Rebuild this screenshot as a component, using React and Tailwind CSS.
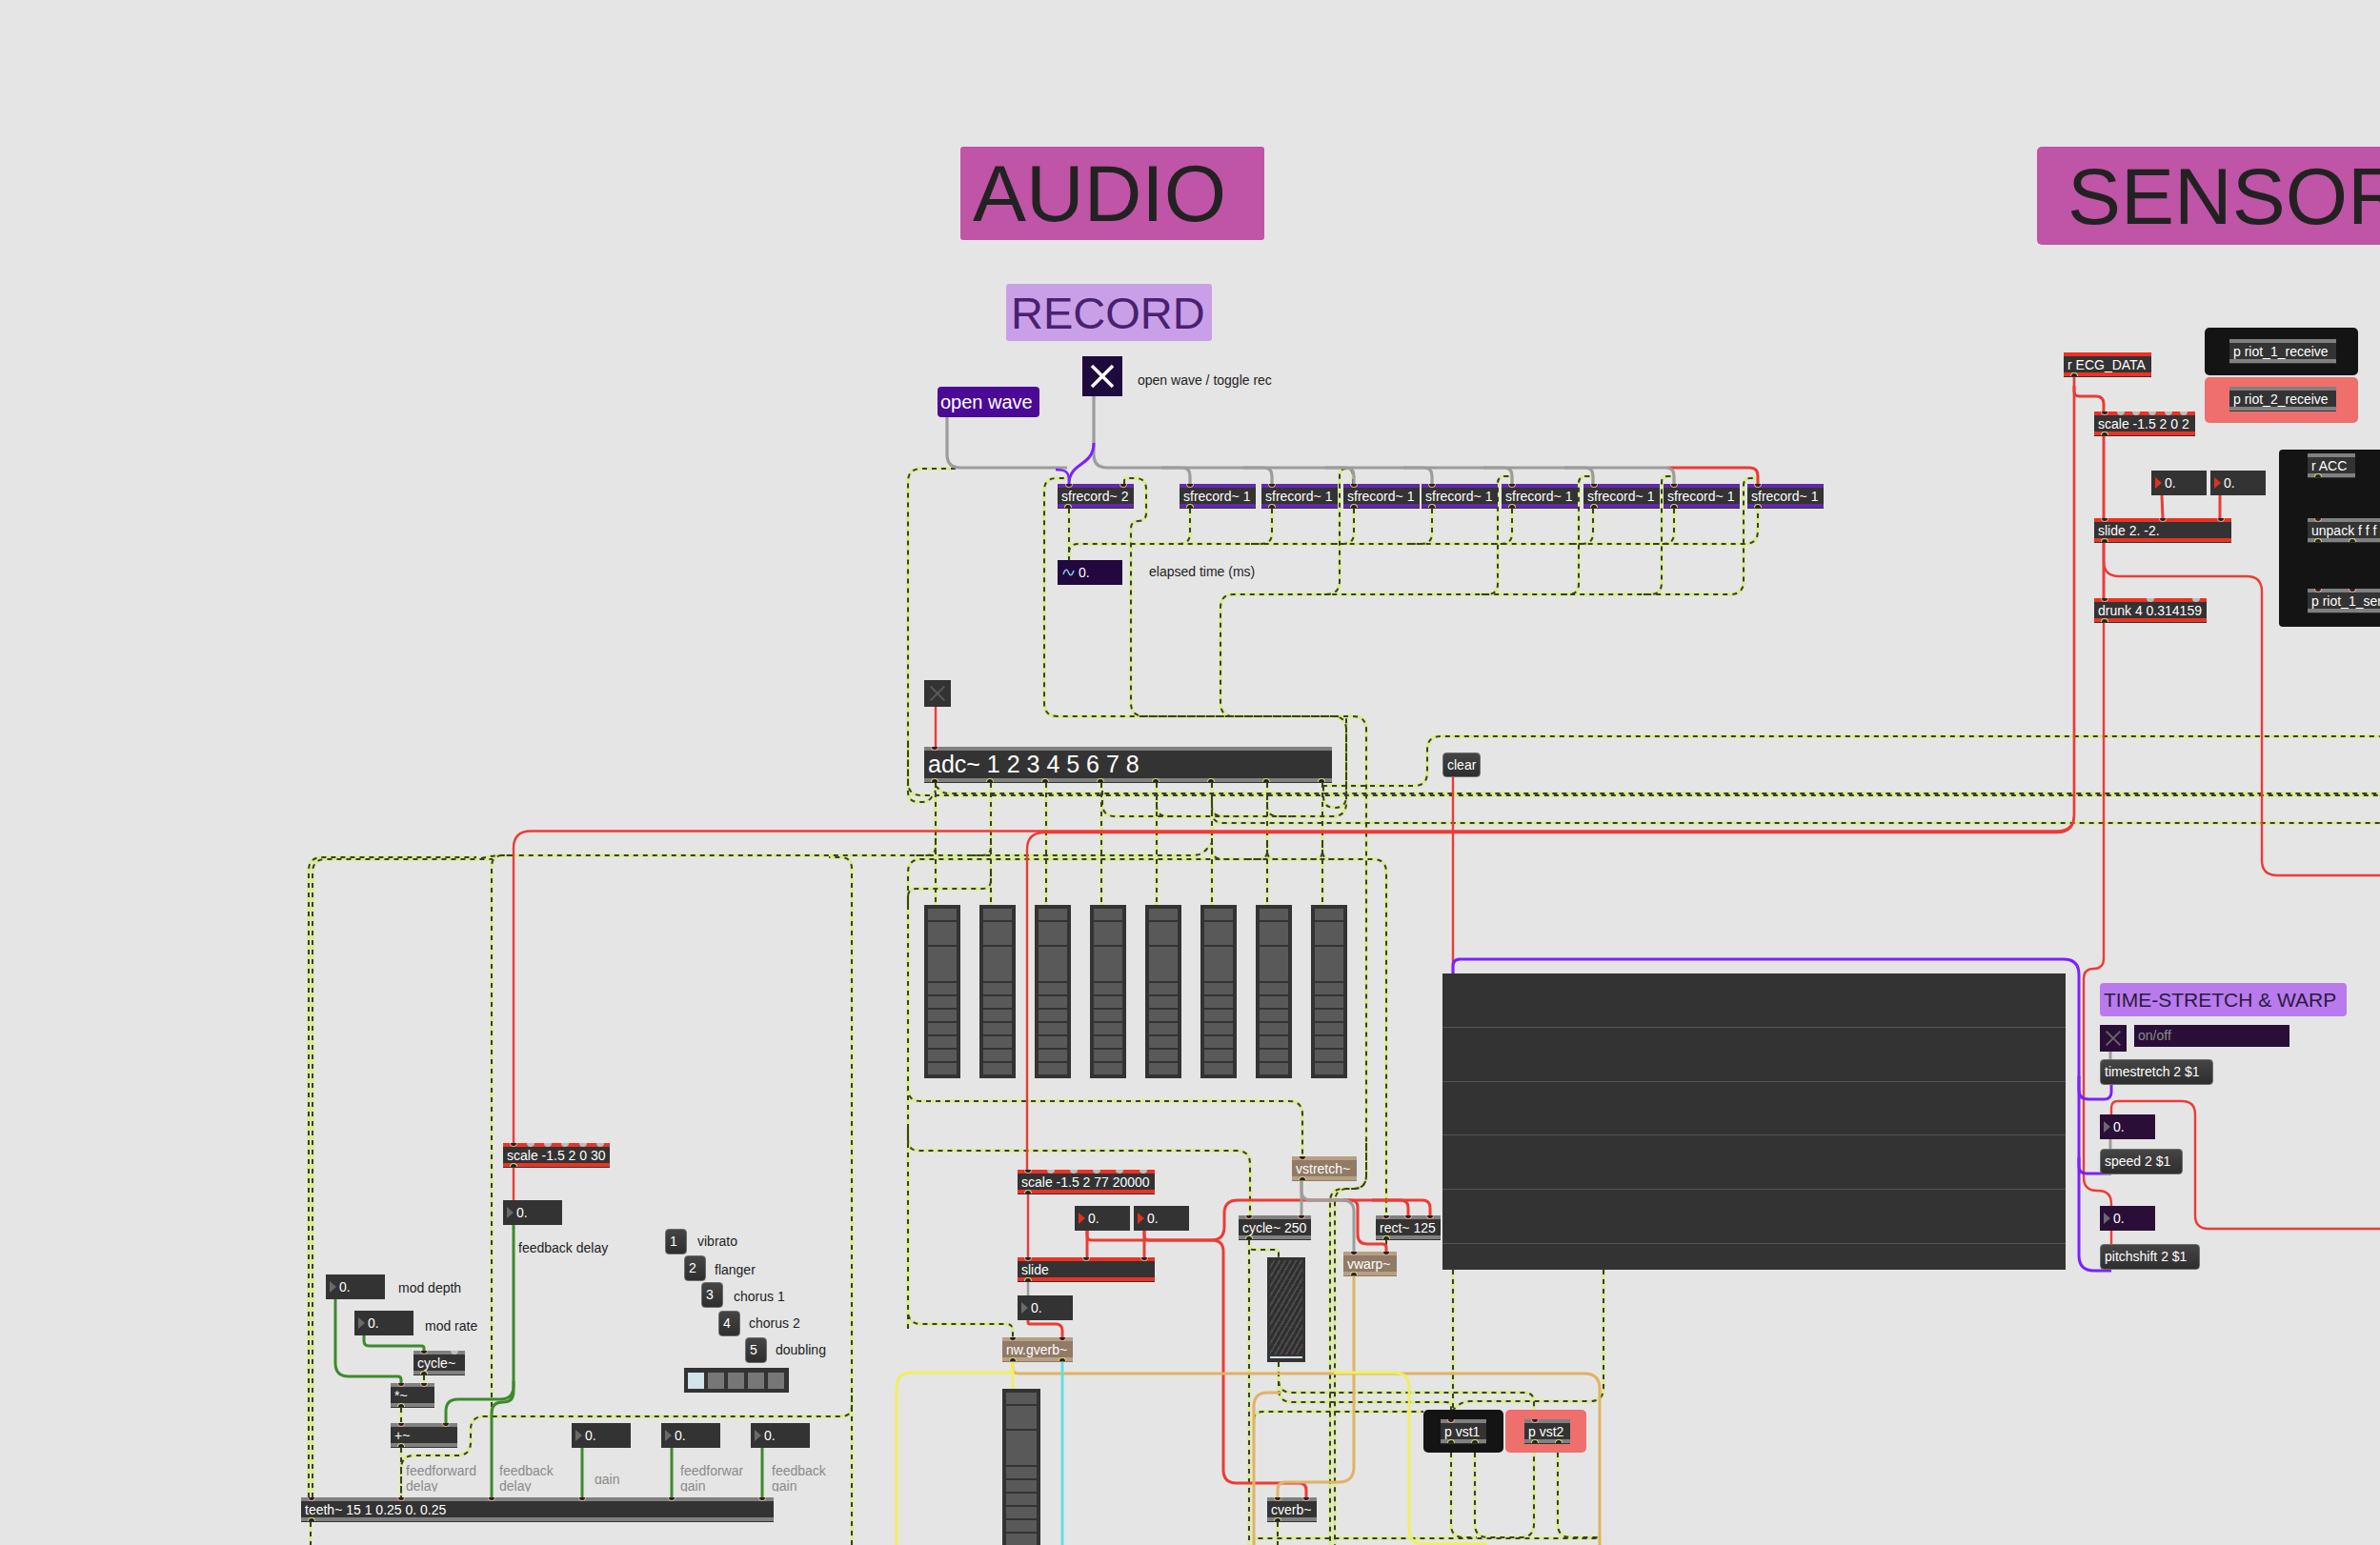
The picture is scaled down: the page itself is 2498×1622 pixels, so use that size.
import React from 'react';

// Rounded orthogonal patch cords, the way Max draws them
const cord = (pts, r = 14) => {
  let d = `M${pts[0][0]} ${pts[0][1]}`;
  for (let i = 1; i < pts.length - 1; i++) {
    const [px, py] = pts[i - 1];
    const [cx, cy] = pts[i];
    const [nx, ny] = pts[i + 1];
    const l1 = Math.hypot(cx - px, cy - py) || 1;
    const l2 = Math.hypot(nx - cx, ny - cy) || 1;
    const c = Math.min(r, l1 / 2, l2 / 2);
    d += ` L${cx - ((cx - px) / l1) * c} ${cy - ((cy - py) / l1) * c}`;
    d += ` Q${cx} ${cy} ${cx + ((nx - cx) / l2) * c} ${cy + ((ny - cy) / l2) * c}`;
  }
  const last = pts[pts.length - 1];
  return `${d} L${last[0]} ${last[1]}`;
};

const signalCords = [
  // sfrecord outlets and elapsed time bus
  [[1122, 534], [1122, 588]],
  [[1122, 590], [1122, 571], [1845, 571], [1845, 534]],
  ...[1249, 1335, 1421, 1503, 1587, 1672, 1757].map((x) => [[x, 534], [x, 571], [x - 22, 571]]),
  // adc~ outlets back up to the sfrecord inlets
  [[1122, 508], [1122, 502], [1096, 502], [1096, 752], [1413, 752], [1413, 848], [1389, 848], [1389, 822]],
  [[1180, 508], [1180, 502], [1203, 502], [1203, 547], [1187, 547], [1187, 752], [1300, 752]],
  [[1300, 752], [1434, 752], [1434, 1248], [1401, 1248], [1401, 1622]],
  [[1434, 1200], [1434, 1248], [1396, 1248], [1396, 1622]],
  [[1420, 508], [1420, 492], [1406, 492], [1406, 624], [1281, 624], [1281, 752], [1320, 752]],
  [[1845, 508], [1845, 502], [1830, 502], [1830, 624], [1390, 624]],
  [[1757, 508], [1757, 500], [1744, 500], [1744, 624], [1720, 624]],
  [[1672, 508], [1672, 500], [1657, 500], [1657, 624], [1635, 624]],
  [[1587, 508], [1587, 500], [1572, 500], [1572, 624], [1550, 624]],
  // long runs to the right
  [[1003, 492], [953, 492], [953, 835], [2498, 835]],
  [[953, 780], [953, 842], [975, 842], [982, 830]],
  [[982, 825], [990, 833], [2498, 833]],
  [[1157, 830], [1157, 857], [1413, 857], [1413, 752]],
  [[1214, 835], [1214, 857], [1240, 857]],
  [[1272, 835], [1272, 857], [1295, 857]],
  [[1330, 835], [1330, 857], [1355, 857]],
  [[1272, 840], [1272, 864], [2498, 864]],
  [[1388, 825], [1498, 825], [1498, 773], [2498, 773]],
  // adc~ to meters
  ...[982, 1040, 1098, 1156, 1214, 1272, 1330, 1388].map((x) => [[x, 822], [x, 950]]),
  // big lower left frames
  [[324, 1572], [324, 900], [500, 900]],
  [[328, 1572], [328, 902], [517, 902]],
  [[505, 901], [520, 898], [1261, 898], [1272, 885]],
  [[516, 1487], [516, 898], [540, 898]],
  [[894, 1622], [894, 900], [870, 900]],
  [[894, 1465], [894, 1487], [494, 1487], [494, 1528], [421, 1528], [421, 1572]],
  [[953, 1395], [953, 902], [1455, 902], [1455, 1276]],
  [[953, 1130], [953, 1156], [1367, 1156], [1367, 1214]],
  [[953, 1185], [953, 1208], [1312, 1208], [1312, 1276]],
  [[953, 1300], [953, 1390], [1063, 1390], [1063, 1404]],
  [[953, 950], [953, 933], [1040, 933], [1040, 915]],
  [[982, 880], [982, 898], [960, 898]],
  [[1040, 880], [1040, 898], [1015, 898]],
  [[1272, 880], [1272, 902], [1296, 902]],
  [[1330, 885], [1330, 902], [1305, 902]],
  [[1330, 885], [1330, 902], [1355, 902]],
  [[1388, 885], [1388, 902], [1365, 902]],
  [[1388, 885], [1388, 902], [1410, 902]],
  // small hops
  [[421, 1478], [421, 1494]],
  [[445, 1444], [445, 1452]],
  [[421, 1520], [421, 1572]],
  [[326, 1598], [326, 1622]],
  [[1311, 1302], [1311, 1622]],
  [[1311, 1302], [1311, 1312], [1342, 1312], [1342, 1320]],
  [[1455, 1302], [1455, 1314]],
  // vst section
  [[1342, 1430], [1342, 1462], [1610, 1462], [1610, 1482]],
  [[1342, 1440], [1342, 1472], [1523, 1472], [1523, 1482]],
  [[1316, 1500], [1316, 1482], [1494, 1482]],
  [[1525, 1333], [1525, 1482]],
  [[1683, 1333], [1683, 1471], [1535, 1471], [1523, 1482]],
  [[1341, 1598], [1341, 1622]],
  [[1523, 1525], [1523, 1614], [1550, 1614]],
  [[1548, 1525], [1548, 1614], [1610, 1614], [1610, 1525]],
  [[1635, 1525], [1635, 1614], [1679, 1614], [1679, 1622]],
  [[1316, 1622], [1316, 1615], [1679, 1615]],
];

const colorCords = [
  { color: '#ee3b35', width: 2.4, pts: [[2177, 396], [2177, 872.5], [539, 872.5], [539, 1200]], r: 18 },
  { color: '#ee3b35', width: 2.4, pts: [[2177, 396], [2177, 874], [1078, 874], [1078, 1228]], r: 18 },
  { color: '#ee3b35', width: 3, pts: [[2177, 405], [2177, 416], [2208, 416], [2208, 432]], r: 10 },
  { color: '#ee3b35', width: 3, pts: [[2208, 457], [2208, 544]] },
  { color: '#ee3b35', width: 3, pts: [[2269, 520], [2270, 544]] },
  { color: '#ee3b35', width: 3, pts: [[2330, 520], [2330, 544]] },
  { color: '#ee3b35', width: 2.4, pts: [[2208, 570], [2208, 605], [2374, 605], [2374, 919], [2498, 919]], r: 16 },
  { color: '#ee3b35', width: 3, pts: [[2208, 570], [2208, 628]] },
  { color: '#ee3b35', width: 2.4, pts: [[2208, 654], [2208, 1017], [2187, 1017], [2187, 1250], [2216, 1250], [2216, 1306]] },
  { color: '#ee3b35', width: 2.4, pts: [[2216, 1170], [2216, 1156], [2304, 1156], [2304, 1290], [2498, 1290]] },
  { color: '#ee3b35', width: 2.4, pts: [[1525, 816], [1525, 1022]] },
  { color: '#ee3b35', width: 2.4, pts: [[982, 742], [982, 784]] },
  { color: '#ee3b35', width: 2.4, pts: [[539, 1226], [539, 1260]] },
  { color: '#ee3b35', width: 2.4, pts: [[1079, 1254], [1079, 1320]] },
  { color: '#ee3b35', width: 3, pts: [[1141, 1292], [1141, 1320]] },
  { color: '#ee3b35', width: 3, pts: [[1201, 1292], [1201, 1320]] },
  { color: '#ee3b35', width: 3, pts: [[1141, 1292], [1141, 1302], [1285, 1302], [1285, 1260], [1501, 1260], [1501, 1276]] },
  { color: '#ee3b35', width: 3, pts: [[1201, 1292], [1201, 1302], [1260, 1302]] },
  { color: '#ee3b35', width: 3, pts: [[1440, 1260], [1478, 1260], [1478, 1276]] },
  { color: '#ee3b35', width: 3, pts: [[1410, 1260], [1425, 1260], [1425, 1306], [1455, 1306], [1455, 1314]], r: 10 },
  { color: '#ee3b35', width: 3, pts: [[1260, 1302], [1284, 1302], [1284, 1557], [1371, 1557], [1371, 1572]] },
  { color: '#ee3b35', width: 3, pts: [[1079, 1386], [1079, 1390], [1115, 1390], [1115, 1404]], r: 8 },
  { color: '#ee3b35', width: 3, pts: [[1750, 491], [1845, 491], [1845, 508]] },
  { color: '#9c9c9c', width: 3.2, pts: [[994, 438], [994, 491], [1120, 491]] },
  { color: '#9c9c9c', width: 3.2, pts: [[1148, 416], [1148, 491], [1757, 491], [1757, 508]] },
  ...[1249, 1335, 1421, 1503, 1587, 1672].map((x) => ({ color: '#9c9c9c', width: 3.2, pts: [[x - 30, 491], [x, 491], [x, 508]] })),
  { color: '#9c9c9c', width: 2.5, pts: [[1079, 1346], [1079, 1360]] },
  { color: '#9c9c9c', width: 3, pts: [[1366, 1240], [1366, 1276]] },
  { color: '#9c9c9c', width: 3, pts: [[1366, 1240], [1366, 1260], [1421, 1260], [1421, 1314]], r: 12 },
  { color: '#9c9c9c', width: 3, pts: [[2215, 1104], [2215, 1112]] },
  { color: '#9c9c9c', width: 3, pts: [[2215, 1196], [2215, 1206]] },
  { color: '#e2b264', width: 3, pts: [[1421, 1340], [1421, 1556], [1341, 1556], [1341, 1572]], r: 16 },
  { color: '#e2b264', width: 3, pts: [[1063, 1430], [1063, 1442], [1679, 1442], [1679, 1622]], r: 16 },
  { color: '#e2b264', width: 3, pts: [[1345, 1462], [1316, 1462], [1316, 1622]], r: 16 },
  { color: '#f0ee62', width: 3, pts: [[1063, 1430], [1063, 1458]] },
  { color: '#f0ee62', width: 3, pts: [[1063, 1430], [1063, 1441], [941, 1441], [941, 1622]], r: 16 },
  { color: '#f0ee62', width: 3, pts: [[1400, 1441], [1479, 1441], [1479, 1621], [1560, 1621]], r: 16 },
  { color: '#62dede', width: 3, pts: [[1115, 1430], [1115, 1622]] },
  { color: '#7a22ff', width: 3, pts: [[1525, 1022], [1525, 1007], [2182, 1007], [2182, 1334], [2216, 1334]], r: 16 },
  { color: '#7a22ff', width: 3, pts: [[2216, 1139], [2216, 1154], [2182, 1154], [2182, 1130]], r: 10 },
  { color: '#7a22ff', width: 3, pts: [[2216, 1232], [2182, 1232], [2182, 1215]], r: 8 },
  { color: '#3d8a2b', width: 3, pts: [[352, 1364], [352, 1445], [421, 1445], [421, 1452]] },
  { color: '#3d8a2b', width: 3, pts: [[382, 1402], [382, 1413], [445, 1413], [445, 1418]], r: 10 },
  { color: '#3d8a2b', width: 3, pts: [[539, 1286], [539, 1469], [468, 1469], [468, 1494]] },
  { color: '#3d8a2b', width: 3, pts: [[539, 1450], [539, 1472], [516, 1472], [516, 1572]] },
  { color: '#3d8a2b', width: 3, pts: [[611, 1520], [611, 1572]] },
  { color: '#3d8a2b', width: 3, pts: [[705, 1520], [705, 1572]] },
  { color: '#3d8a2b', width: 3, pts: [[800, 1520], [800, 1572]] },
];

function Cords() {
  return (
    <svg className="absolute left-0 top-0" width="2498" height="1622" fill="none">
      {signalCords.map((pts, i) => (
        <path key={i} d={cord(pts)} stroke="#d8ee8c" strokeWidth="3.4" />
      ))}
      {signalCords.map((pts, i) => (
        <path key={i} d={cord(pts)} stroke="#3b3b3b" strokeWidth="2" strokeDasharray="5 5" />
      ))}
      {colorCords.map((c, i) => (
        <path key={i} d={cord(c.pts, c.r ?? 14)} stroke={c.color} strokeWidth={c.width} />
      ))}
      <path d="M1148 465C1148 490 1122 485 1122 508" stroke="#7a22ff" strokeWidth="3" />
      <path d="M1108 493C1118 493 1122 495 1122 505" stroke="#7a22ff" strokeWidth="2.4" />
    </svg>
  );
}

const bandStyles = {
  gray: { body: 'bg-[#333333]', band: 'bg-[#808080]' },
  red: { body: 'bg-[#333333]', band: 'bg-[#ee3124]' },
  purple: { body: 'bg-[#333333]', band: 'bg-[#6229ad]' },
  tan: { body: 'bg-[#917a66]', band: 'bg-[#b5a084]' },
};

// Max object box: coloured strip on top and bottom with inlets and outlets
function Obj({ className, band = 'gray', text, inlets = [], outlets = [], idle = [], textClass = 'text-[14px]' }) {
  const s = bandStyles[band];
  return (
    <div className={`absolute h-[26px] flex items-center pl-[4px] whitespace-nowrap text-white overflow-hidden ${s.body} ${className}`}>
      <div className={`absolute left-0 right-0 top-0 h-[4px] ${s.band}`} />
      <div className={`absolute left-0 right-0 bottom-[1px] h-[4px] ${s.band}`} />
      <span className={`relative ${textClass}`}>{text}</span>
      {idle.map((x) => (
        <div key={x} className="absolute top-0 w-[8px] h-[4px] rounded-b-full bg-[#bdbdbd]" style={{ left: x - 4 }} />
      ))}
      {inlets.map((x) => (
        <div key={x} className="absolute top-0 w-[8px] h-[4px] rounded-b-full bg-[#222222] border border-t-0 border-[#e8a090]" style={{ left: x - 4 }} />
      ))}
      {outlets.map((x) => (
        <div key={x} className="absolute bottom-[1px] w-[8px] h-[4px] rounded-t-full bg-[#222222] border border-b-0 border-[#d8d870]" style={{ left: x - 4 }} />
      ))}
    </div>
  );
}

function NumBox({ className, red = false, bg = 'bg-[#333333]' }) {
  return (
    <div className={`absolute h-[26px] flex items-center text-white text-[14px] ${bg} ${className}`}>
      <div className={`ml-[4px] w-[7px] h-[12px] [clip-path:polygon(0_0,100%_50%,0_100%)] ${red ? 'bg-[#e0301e]' : 'bg-[#6a6a6a]'}`} />
      <span className="ml-[3px]">0.</span>
    </div>
  );
}

function Msg({ className, text }) {
  return (
    <div className={`absolute flex items-center pl-[4px] rounded-[4px] whitespace-nowrap text-[14px] text-white bg-linear-to-b from-[#454545] to-[#2e2e2e] border border-[#6e6e6e] ${className}`}>
      {text}
    </div>
  );
}

function Label({ className, children }) {
  return <div className={`absolute whitespace-nowrap text-[14px] leading-[16px] text-[#222222] ${className}`}>{children}</div>;
}

function GrayLabel({ className, lines }) {
  return (
    <div className={`absolute overflow-hidden text-[14px] leading-[16px] text-[#8a8a8a] whitespace-nowrap ${className}`}>
      {lines.map((l) => (
        <div key={l}>{l}</div>
      ))}
    </div>
  );
}

function Cross({ className, color, weight, inset }) {
  return (
    <div className={`absolute ${className}`}>
      <svg className="w-full h-full" viewBox="0 0 42 42">
        <path d={`M${inset} ${inset}L${42 - inset} ${42 - inset}M${42 - inset} ${inset}L${inset} ${42 - inset}`} stroke={color} strokeWidth={weight} />
      </svg>
    </div>
  );
}

const cellHeights = ['h-[12px]', 'h-[24px]', 'h-[36px]', 'h-[12px]', 'h-[12px]', 'h-[12px]', 'h-[12px]', 'h-[12px]', 'h-[12px]', 'h-[12px]'];

function Meter({ className }) {
  return (
    <div className={`absolute w-[38px] h-[182px] p-[4px] flex flex-col gap-[2px] bg-[#333333] ${className}`}>
      {cellHeights.map((h, i) => (
        <div key={i} className={`${h} bg-[#595959]`} />
      ))}
    </div>
  );
}

export default function App() {
  return (
    <div className="relative w-[2498px] h-[1622px] overflow-hidden bg-[#e5e5e5] font-['Liberation_Sans',Arial,sans-serif]">
      <Cords />

      {/* section titles */}
      <div className="absolute left-[1008px] top-[154px] w-[319px] h-[98px] rounded-[3px] pl-[13px] flex items-center bg-[#c054a6] text-[84px] leading-none text-[#222222]">AUDIO</div>
      <div className="absolute left-[2138px] top-[154px] w-[420px] h-[103px] rounded-[5px] pl-[32px] flex items-center bg-[#c054a6] text-[84px] leading-none text-[#222222] whitespace-nowrap">SENSOR</div>
      <div className="absolute left-[1056px] top-[298px] w-[216px] h-[60px] rounded-[3px] pl-[5px] flex items-center bg-[#c9a0e8] text-[47px] leading-none text-[#4a2070]">RECORD</div>
      <div className="absolute left-[2204px] top-[1032px] w-[259px] h-[35px] rounded-[4px] pl-[4px] flex items-center bg-[#b97aee] text-[21px] leading-none text-[#2a1b3e] whitespace-nowrap">TIME-STRETCH &amp; WARP</div>

      {/* record section */}
      <div className="absolute left-[984px] top-[406px] w-[107px] h-[32px] rounded-[4px] pl-[3px] flex items-center bg-[#4b0a96] text-[20px] text-white whitespace-nowrap">open wave</div>
      <Cross className="left-[1136px] top-[374px] w-[42px] h-[42px] bg-[#1f0a3e]" color="#ffffff" weight="3.5" inset="10" />
      <Label className="left-[1194px] top-[391px]">open wave / toggle rec</Label>
      <Obj className="left-[1110px] top-[508px] w-[80px]" band="purple" text="sfrecord~ 2" inlets={[12, 69]} outlets={[11]} />
      <Obj className="left-[1238px] top-[508px] w-[80px]" band="purple" text="sfrecord~ 1" inlets={[11]} outlets={[11]} />
      <Obj className="left-[1324px] top-[508px] w-[80px]" band="purple" text="sfrecord~ 1" inlets={[11]} outlets={[11]} />
      <Obj className="left-[1410px] top-[508px] w-[80px]" band="purple" text="sfrecord~ 1" inlets={[11]} outlets={[11]} />
      <Obj className="left-[1492px] top-[508px] w-[80px]" band="purple" text="sfrecord~ 1" inlets={[11]} outlets={[11]} />
      <Obj className="left-[1576px] top-[508px] w-[80px]" band="purple" text="sfrecord~ 1" inlets={[11]} outlets={[11]} />
      <Obj className="left-[1662px] top-[508px] w-[80px]" band="purple" text="sfrecord~ 1" inlets={[11]} outlets={[11]} />
      <Obj className="left-[1746px] top-[508px] w-[80px]" band="purple" text="sfrecord~ 1" inlets={[11]} outlets={[11]} />
      <Obj className="left-[1834px] top-[508px] w-[80px]" band="purple" text="sfrecord~ 1" inlets={[11]} outlets={[11]} />
      <div className="absolute left-[1110px] top-[588px] w-[68px] h-[26px] flex items-center bg-[#22083f] text-[14px] text-white">
        <svg className="ml-[5px]" width="13" height="10" viewBox="0 0 13 10" fill="none">
          <path d="M1 7C3 1 5 1 6.5 5S10 9 12 3" stroke="#7fc8dc" strokeWidth="1.6" />
        </svg>
        <span className="ml-[4px]">0.</span>
      </div>
      <Label className="left-[1206px] top-[592px]">elapsed time (ms)</Label>

      {/* audio input */}
      <Cross className="left-[970px] top-[714px] w-[28px] h-[28px] bg-[#333333]" color="#5a5a5a" weight="3" inset="10" />
      <Obj className="left-[970px] top-[784px] w-[428px] !h-[38px]" text="adc~ 1 2 3 4 5 6 7 8" textClass="text-[25px]" inlets={[11]} outlets={[11, 69, 127, 185, 243, 301, 359, 417]} />
      <Msg className="left-[1514px] top-[790px] w-[40px] h-[26px]" text="clear" />
      <Meter className="left-[970px] top-[950px]" />
      <Meter className="left-[1028px] top-[950px]" />
      <Meter className="left-[1086px] top-[950px]" />
      <Meter className="left-[1144px] top-[950px]" />
      <Meter className="left-[1202px] top-[950px]" />
      <Meter className="left-[1260px] top-[950px]" />
      <Meter className="left-[1318px] top-[950px]" />
      <Meter className="left-[1376px] top-[950px]" />

      {/* big table */}
      <div className="absolute left-[1514px] top-[1022px] w-[654px] h-[311px] flex flex-col bg-[#333333]">
        <div className="h-[57px] border-b border-[#555555]" />
        <div className="h-[57px] border-b border-[#555555]" />
        <div className="h-[56px] border-b border-[#555555]" />
        <div className="h-[57px] border-b border-[#555555]" />
        <div className="h-[57px] border-b border-[#555555]" />
      </div>

      {/* sensor section */}
      <Obj className="left-[2166px] top-[370px] w-[92px]" band="red" text="r ECG_DATA" outlets={[11]} />
      <div className="absolute left-[2314px] top-[344px] w-[161px] h-[50px] rounded-[5px] bg-[#141414]" />
      <Obj className="left-[2340px] top-[356px] w-[112px]" text="p riot_1_receive" />
      <div className="absolute left-[2314px] top-[396px] w-[161px] h-[48px] rounded-[5px] bg-[#ee6f6c]" />
      <Obj className="left-[2340px] top-[406px] w-[112px]" text="p riot_2_receive" />
      <Obj className="left-[2198px] top-[432px] w-[106px]" band="red" text="scale -1.5 2 0 2" inlets={[11]} idle={[28, 44, 61, 78, 94]} outlets={[11]} />
      <NumBox className="left-[2258px] top-[494px] w-[58px]" red />
      <NumBox className="left-[2320px] top-[494px] w-[58px]" red />
      <Obj className="left-[2198px] top-[544px] w-[144px]" band="red" text="slide 2. -2." inlets={[11, 72, 133]} outlets={[11]} />
      <Obj className="left-[2198px] top-[628px] w-[118px]" band="red" text="drunk 4 0.314159" inlets={[11]} idle={[59, 107]} outlets={[11]} />
      <div className="absolute left-[2392px] top-[472px] w-[140px] h-[186px] rounded-[4px] bg-[#141414]" />
      <Obj className="left-[2422px] top-[476px] w-[50px]" text="r ACC" outlets={[11]} />
      <Obj className="left-[2422px] top-[544px] w-[120px]" text="unpack f f f" inlets={[11]} outlets={[11, 47]} />
      <Obj className="left-[2422px] top-[618px] w-[120px]" text="p riot_1_send" inlets={[11, 47]} />

      {/* time stretch */}
      <Cross className="left-[2204px] top-[1076px] w-[28px] h-[28px] bg-[#2a0e38]" color="#666666" weight="3" inset="10" />
      <div className="absolute left-[2240px] top-[1076px] w-[163px] h-[23px] pl-[4px] flex items-center bg-[#2a0e38] text-[14px] text-[#8a8a8a]">on/off</div>
      <Msg className="left-[2204px] top-[1112px] w-[119px] h-[27px]" text="timestretch 2 $1" />
      <NumBox className="left-[2204px] top-[1170px] w-[58px]" bg="bg-[#2a0e38]" />
      <Msg className="left-[2204px] top-[1206px] w-[87px] h-[27px]" text="speed 2 $1" />
      <NumBox className="left-[2204px] top-[1266px] w-[58px]" bg="bg-[#2a0e38]" />
      <Msg className="left-[2204px] top-[1306px] w-[105px] h-[27px]" text="pitchshift 2 $1" />

      {/* delay section */}
      <Obj className="left-[528px] top-[1200px] w-[112px]" band="red" text="scale -1.5 2 0 30" inlets={[11]} idle={[29, 47, 65, 84, 102]} outlets={[11]} />
      <NumBox className="left-[528px] top-[1260px] w-[62px]" />
      <Label className="left-[544px] top-[1302px]">feedback delay</Label>
      <NumBox className="left-[342px] top-[1338px] w-[62px]" />
      <Label className="left-[418px] top-[1344px]">mod depth</Label>
      <NumBox className="left-[372px] top-[1376px] w-[62px]" />
      <Label className="left-[446px] top-[1384px]">mod rate</Label>
      <Obj className="left-[434px] top-[1418px] w-[54px]" text="cycle~" inlets={[11]} idle={[43]} outlets={[11]} />
      <Obj className="left-[410px] top-[1452px] w-[46px]" text="*~" inlets={[11, 35]} outlets={[11]} />
      <Obj className="left-[410px] top-[1494px] w-[70px]" text="+~" inlets={[11, 58]} outlets={[11]} />
      <Msg className="left-[698px] top-[1290px] w-[23px] h-[27px]" text="1" />
      <Label className="left-[732px] top-[1295px]">vibrato</Label>
      <Msg className="left-[718px] top-[1318px] w-[23px] h-[27px]" text="2" />
      <Label className="left-[750px] top-[1325px]">flanger</Label>
      <Msg className="left-[736px] top-[1346px] w-[23px] h-[27px]" text="3" />
      <Label className="left-[770px] top-[1353px]">chorus 1</Label>
      <Msg className="left-[754px] top-[1376px] w-[23px] h-[27px]" text="4" />
      <Label className="left-[786px] top-[1381px]">chorus 2</Label>
      <Msg className="left-[782px] top-[1404px] w-[23px] h-[27px]" text="5" />
      <Label className="left-[814px] top-[1409px]">doubling</Label>
      <div className="absolute left-[718px] top-[1436px] w-[110px] h-[26px] px-[4px] flex items-center gap-[4px] bg-[#333333]">
        <div className="w-[17px] h-[17px] bg-[#d0e4ea]" />
        <div className="w-[17px] h-[17px] bg-[#777777]" />
        <div className="w-[17px] h-[17px] bg-[#777777]" />
        <div className="w-[17px] h-[17px] bg-[#777777]" />
        <div className="w-[17px] h-[17px] bg-[#777777]" />
      </div>
      <NumBox className="left-[600px] top-[1494px] w-[62px]" />
      <NumBox className="left-[694px] top-[1494px] w-[62px]" />
      <NumBox className="left-[788px] top-[1494px] w-[62px]" />
      <GrayLabel className="left-[426px] top-[1536px] w-[76px] h-[30px]" lines={['feedforward', 'delay']} />
      <GrayLabel className="left-[524px] top-[1536px] w-[66px] h-[30px]" lines={['feedback', 'delay']} />
      <GrayLabel className="left-[624px] top-[1545px] w-[40px] h-[13px]" lines={['gain']} />
      <GrayLabel className="left-[714px] top-[1536px] w-[66px] h-[30px]" lines={['feedforward', 'gain']} />
      <GrayLabel className="left-[810px] top-[1536px] w-[66px] h-[30px]" lines={['feedback', 'gain']} />
      <Obj className="left-[316px] top-[1572px] w-[496px]" text="teeth~ 15 1 0.25 0. 0.25" inlets={[11, 105, 200, 295, 389, 484]} outlets={[11]} />

      {/* effects section */}
      <Obj className="left-[1068px] top-[1228px] w-[144px]" band="red" text="scale -1.5 2 77 20000" inlets={[11]} idle={[35, 59, 83, 107, 132]} outlets={[11]} />
      <NumBox className="left-[1128px] top-[1266px] w-[58px]" red />
      <NumBox className="left-[1190px] top-[1266px] w-[58px]" red />
      <Obj className="left-[1068px] top-[1320px] w-[144px]" band="red" text="slide" inlets={[11, 72, 133]} outlets={[11]} />
      <NumBox className="left-[1068px] top-[1360px] w-[58px]" />
      <Obj className="left-[1052px] top-[1404px] w-[74px]" band="tan" text="nw.gverb~" inlets={[11, 63]} outlets={[11, 63]} />
      <Meter className="left-[1052px] top-[1458px] !w-[40px]" />
      <Obj className="left-[1356px] top-[1214px] w-[68px]" band="tan" text="vstretch~" inlets={[11]} outlets={[11]} />
      <Obj className="left-[1300px] top-[1276px] w-[76px]" text="cycle~ 250" inlets={[11, 66]} outlets={[11]} />
      <Obj className="left-[1444px] top-[1276px] w-[68px]" text="rect~ 125" inlets={[11, 34, 57]} outlets={[11]} />
      <Obj className="left-[1410px] top-[1314px] w-[56px]" band="tan" text="vwarp~" inlets={[11, 45]} outlets={[11]} />
      <div className="absolute left-[1330px] top-[1320px] w-[40px] h-[110px] p-[3px] bg-[#333333]">
        <div className="h-[99px] bg-[repeating-linear-gradient(120deg,#2f2f2f_0px,#2f2f2f_3px,#4b4b4b_3px,#4b4b4b_5px)]" />
        <div className="mt-[2px] h-[2px] bg-[#cfe0e8]" />
      </div>
      <div className="absolute left-[1494px] top-[1480px] w-[84px] h-[45px] rounded-[5px] bg-[#141414]" />
      <Obj className="left-[1512px] top-[1490px] w-[48px]" text="p vst1" inlets={[11]} outlets={[11, 36]} />
      <div className="absolute left-[1580px] top-[1480px] w-[85px] h-[45px] rounded-[5px] bg-[#ee6f6c]" />
      <Obj className="left-[1600px] top-[1490px] w-[48px]" text="p vst2" inlets={[11]} outlets={[11, 36]} />
      <Obj className="left-[1330px] top-[1572px] w-[52px]" text="cverb~" inlets={[11, 41]} outlets={[11]} />
    </div>
  );
}
